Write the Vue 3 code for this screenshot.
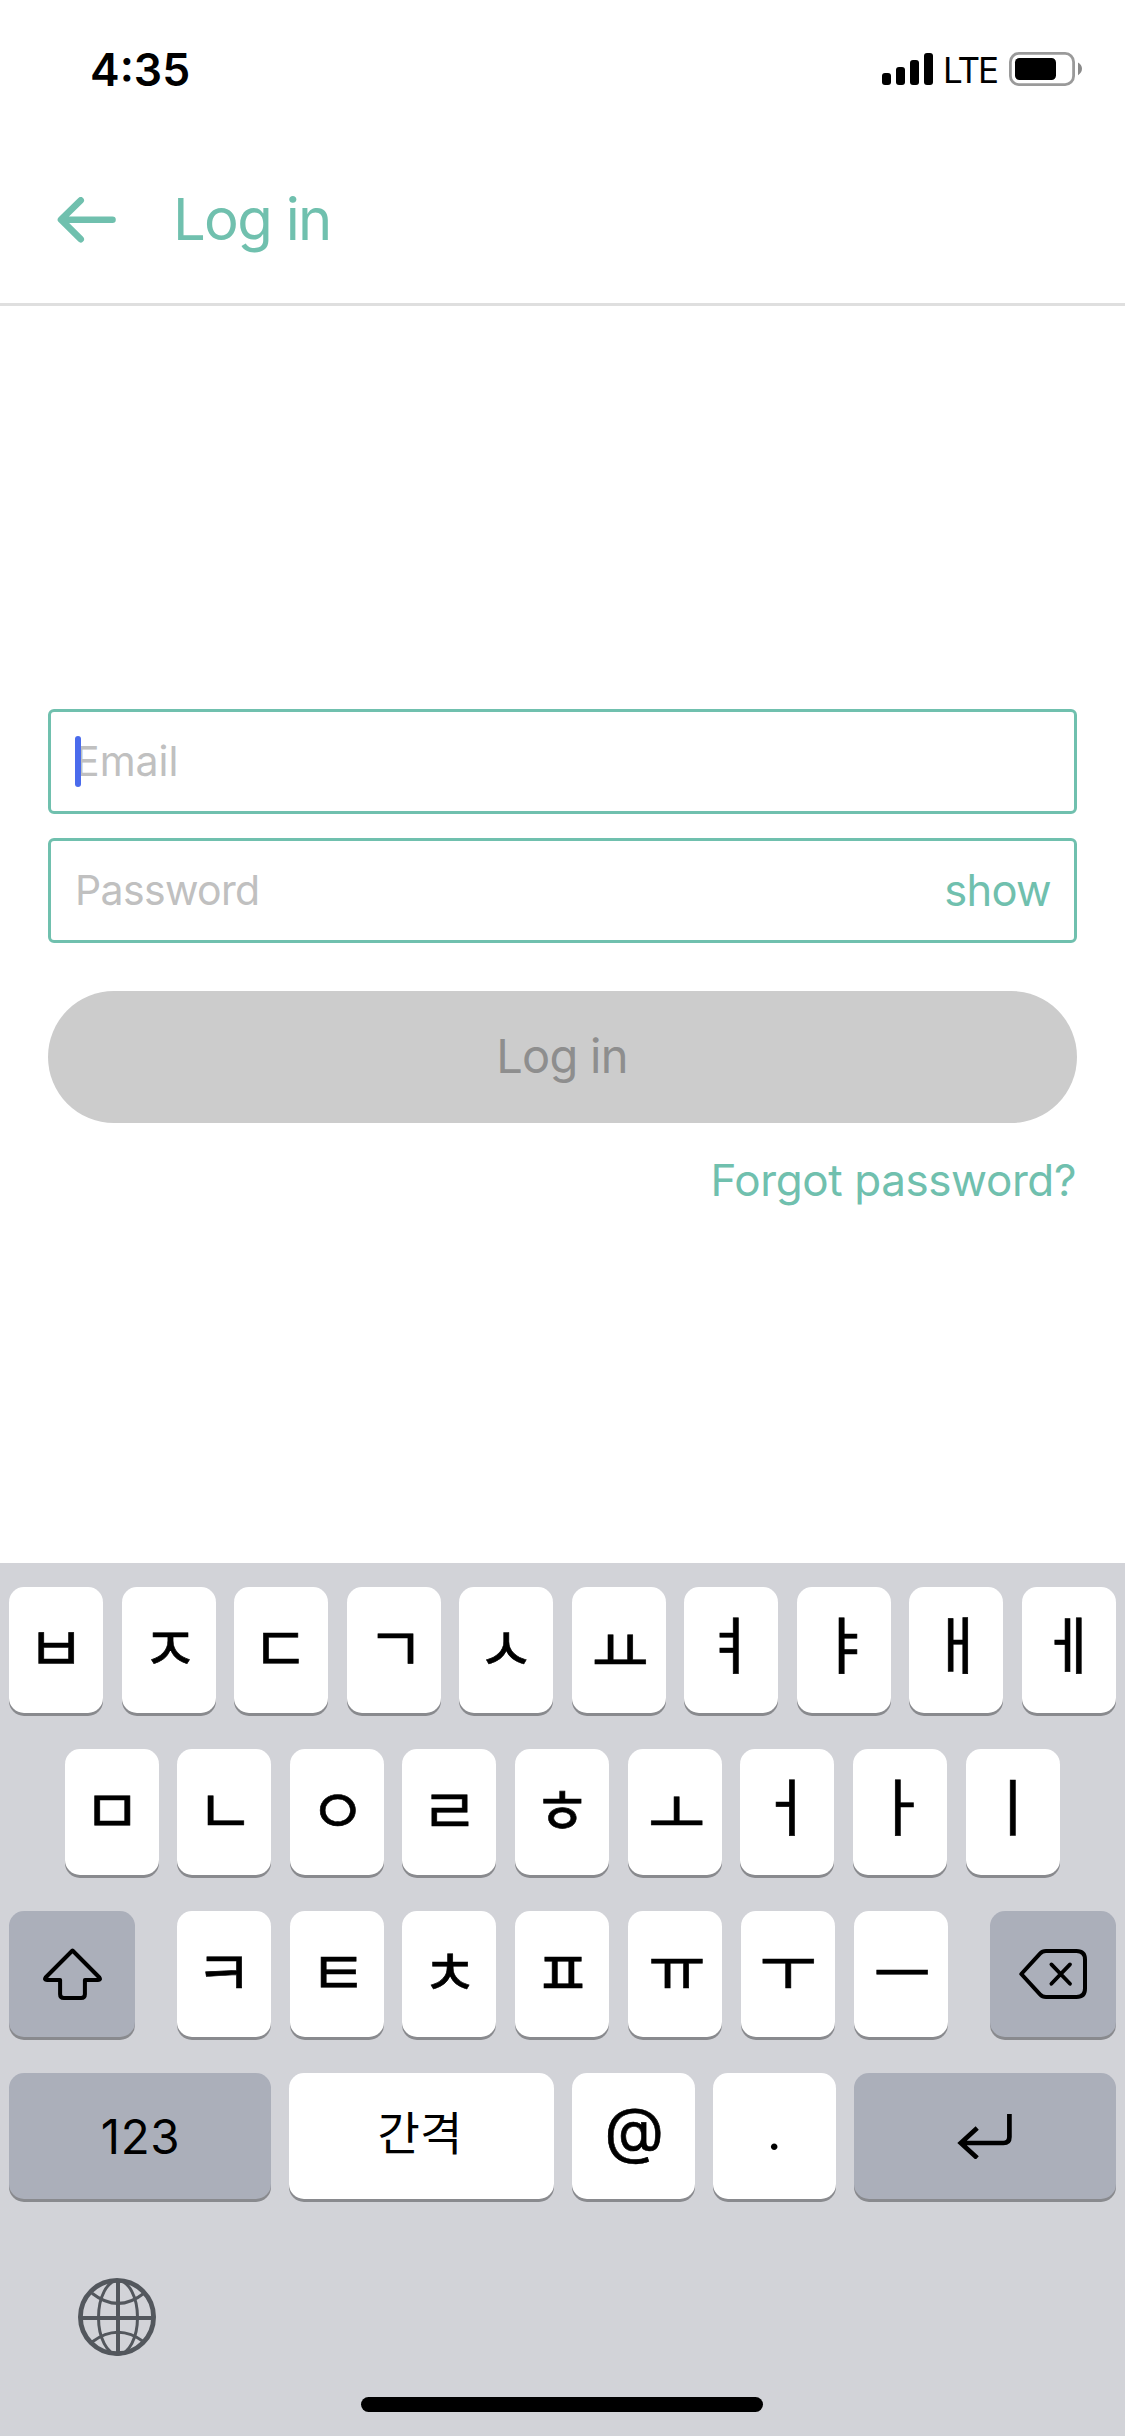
<script setup>
// dx / dy nudge each glyph to its optical position on the key cap
const C = -4.75
const V = -8.25
const rowOne = [
  { c: 'ㅂ', dx: 0, dy: C },
  { c: 'ㅈ', dx: 1.5, dy: C },
  { c: 'ㄷ', dx: -0.5, dy: C },
  { c: 'ㄱ', dx: 2, dy: C },
  { c: 'ㅅ', dx: 0, dy: C },
  { c: 'ㅛ', dx: 1.5, dy: -2.5 },
  { c: 'ㅕ', dx: -1, dy: V },
  { c: 'ㅑ', dx: 1.5, dy: V },
  { c: 'ㅐ', dx: 1.5, dy: V },
  { c: 'ㅔ', dx: 0.5, dy: V },
]
const rowTwo = [
  { c: 'ㅁ', dx: 0.5, dy: C },
  { c: 'ㄴ', dx: 1, dy: C },
  { c: 'ㅇ', dx: 1, dy: C },
  { c: 'ㄹ', dx: 0, dy: C },
  { c: 'ㅎ', dx: 0, dy: C },
  { c: 'ㅗ', dx: 2, dy: -2.5 },
  { c: 'ㅓ', dx: -1, dy: V },
  { c: 'ㅏ', dx: -0.5, dy: V },
  { c: 'ㅣ', dx: 0, dy: V },
]
const rowThree = [
  { c: 'ㅋ', dx: 0, dy: C },
  { c: 'ㅌ', dx: 1.5, dy: C },
  { c: 'ㅊ', dx: 0.5, dy: C },
  { c: 'ㅍ', dx: 0.5, dy: C },
  { c: 'ㅠ', dx: 2, dy: -9 },
  { c: 'ㅜ', dx: 0, dy: -9 },
  { c: 'ㅡ', dx: 1.5, dy: -4 },
]
const shift = (k) => ({ transform: `translate(${k.dx}px, ${k.dy}px)` })
</script>

<template>
  <div class="screen">
    <div class="status">
      <span class="time">4:35</span>
      <div class="indicators">
        <svg class="signal" width="51" height="34" viewBox="0 0 51 34">
          <rect x="0" y="21" width="9" height="12" rx="3" />
          <rect x="14" y="15" width="9" height="18" rx="3" />
          <rect x="28" y="8" width="9" height="25" rx="3" />
          <rect x="42" y="1" width="9" height="32" rx="3" />
        </svg>
        <span class="network">LTE</span>
        <svg class="battery" width="74" height="34" viewBox="0 0 74 34">
          <rect x="1.4" y="1.4" width="63.2" height="31.2" rx="8.5" fill="none" stroke="#9a9a9a" stroke-width="2.8" />
          <rect x="6" y="6" width="41" height="22" rx="4.5" fill="#000" />
          <path d="M69 10.5Q73 13 73 16.8T69 23.2Z" fill="#8a8a8a" />
        </svg>
      </div>
    </div>

    <header class="header">
      <svg class="back" width="60" height="46" viewBox="0 0 60 46">
        <path d="M55.5 22.7H4.5M23.7 3.3L4 22.7L23.7 42.2" fill="none" stroke="#70c0ae" stroke-width="6.6" stroke-linecap="round" stroke-linejoin="round" />
      </svg>
      <h1 class="title">Log in</h1>
    </header>

    <main class="form">
      <div class="field">
        <span class="caret"></span>
        <span class="placeholder">Email</span>
      </div>
      <div class="field">
        <span class="placeholder password">Password</span>
        <span class="show">show</span>
      </div>
      <button class="submit" type="button">Log in</button>
      <a class="forgot">Forgot password?</a>
    </main>

    <section class="keyboard">
      <div class="row">
        <div v-for="k in rowOne" :key="k.c" class="key jamo"><span :style="shift(k)">{{ k.c }}</span></div>
      </div>
      <div class="row row-two">
        <div v-for="k in rowTwo" :key="k.c" class="key jamo"><span :style="shift(k)">{{ k.c }}</span></div>
      </div>
      <div class="row">
        <div class="key dark modifier">
          <svg class="shift" width="60" height="52" viewBox="0 0 60 52">
            <path d="M29.5 2.5L2.6 29.5Q1 32 4 32H17.1V46.2Q17.1 50 20.9 50H38.1Q41.9 50 41.9 46.2V32H55Q58 32 56.4 29.5Z" fill="none" stroke="#000" stroke-width="4" stroke-linejoin="round" />
          </svg>
        </div>
        <div class="letters">
          <div v-for="k in rowThree" :key="k.c" class="key jamo"><span :style="shift(k)">{{ k.c }}</span></div>
        </div>
        <div class="key dark modifier">
          <svg width="68" height="50" viewBox="0 0 68 50">
            <path d="M2.3 25L21 4.6Q23.4 2 27 2H57.5Q66 2 66 10.5V39.5Q66 48 57.5 48H27Q23.4 48 21 45.4Z" fill="none" stroke="#000" stroke-width="4" stroke-linejoin="round" />
            <path d="M32.4 15.4L51 34.8M51 15.4L32.4 34.8" fill="none" stroke="#000" stroke-width="3.8" stroke-linecap="round" />
          </svg>
        </div>
      </div>
      <div class="row">
        <div class="key dark wide numbers"><span>123</span></div>
        <div class="key space"><span>간격</span></div>
        <div class="key half at"><span>@</span></div>
        <div class="key half dot"><span>.</span></div>
        <div class="key dark wide">
          <svg width="56" height="46" viewBox="0 0 56 46">
            <path d="M52.4 1V24Q52.4 30 46.4 30H4M20.2 15L3.8 30L20.2 45" fill="none" stroke="#000" stroke-width="4.7" />
          </svg>
        </div>
      </div>
      <div class="globe">
        <svg width="78" height="78" viewBox="0 0 78 78" fill="none" stroke="#53575d">
          <circle cx="39" cy="39" r="36.6" stroke-width="4.8" />
          <path d="M40 3V75M3 40H75" stroke-width="4" />
          <ellipse cx="40" cy="39.5" rx="19.5" ry="37" stroke-width="3" />
          <path d="M14 15.2Q40 35.6 66 15.2M14 64Q40 44.6 66 64" stroke-width="3" />
        </svg>
      </div>
      <div class="home"></div>
    </section>
  </div>
</template>

<style>
body {
  margin: 0;
  background: #fff;
}
</style>

<style scoped>
.screen {
  width: 1125px;
  height: 2436px;
  display: flex;
  flex-direction: column;
  background: #fff;
  font-family: Inter, "Noto Sans CJK KR", sans-serif;
  overflow: hidden;
}
.status {
  height: 138px;
  box-sizing: border-box;
  padding: 0 42px 0 90px;
  display: flex;
  align-items: center;
  justify-content: space-between;
}
.time {
  font-size: 44.5px;
  line-height: 54px;
  font-weight: 600;
  color: #000;
  padding-top: 1px;
}
.indicators {
  display: flex;
  align-items: center;
}
.network {
  width: 63px;
  margin-left: 10px;
  font-size: 35px;
  line-height: 34px;
  letter-spacing: -2px;
  padding-top: 2px;
}
.battery {
  margin-left: 3px;
}
.header {
  height: 165px;
  box-sizing: content-box;
  border-bottom: 3px solid #dfdfdf;
  display: flex;
  align-items: center;
}
.back {
  margin: -2px 0 0 57px;
}
.title {
  margin: -4px 0 0 56px;
  font-size: 58px;
  line-height: 70px;
  font-weight: 400;
  letter-spacing: -1.7px;
  color: #70c0ae;
}
.form {
  height: 1257px;
  box-sizing: border-box;
  padding: 403px 48px 0;
  display: flex;
  flex-direction: column;
}
.field {
  position: relative;
  height: 105px;
  box-sizing: border-box;
  border: 3px solid #70c0ae;
  border-radius: 6px;
  padding: 0 24px 2px;
  margin-bottom: 24px;
  display: flex;
  align-items: center;
  justify-content: space-between;
}
.caret {
  position: absolute;
  left: 24px;
  top: 24px;
  width: 6px;
  height: 51px;
  border-radius: 3px;
  background: #4a6bec;
}
.placeholder {
  font-size: 41px;
  line-height: 50px;
  color: #c0c0c0;
}
.password {
  letter-spacing: -0.65px;
}
.show {
  font-size: 43.5px;
  line-height: 50px;
  letter-spacing: -0.7px;
  margin-right: -1px;
  color: #70c0ae;
}
.submit {
  height: 132px;
  margin: 24px 0 0;
  padding: 0 1px 2px 0;
  border: 0;
  border-radius: 66px;
  background: #ccc;
  color: #8e8e8e;
  font: 400 47px/130px Inter, sans-serif;
  letter-spacing: -0.75px;
}
.forgot {
  align-self: flex-end;
  margin: 30px 1px 0 0;
  font-size: 44px;
  line-height: 54px;
  letter-spacing: -0.4px;
  color: #70c0ae;
}
.keyboard {
  height: 873px;
  box-sizing: border-box;
  padding: 24px 9.4px 0 9px;
  display: flex;
  flex-direction: column;
  background: #d2d3d8;
  color: #000;
}
.row {
  height: 126px;
  margin-bottom: 36px;
  display: flex;
  justify-content: space-between;
}
.row-two {
  padding: 0 56px 0 55.6px;
}
.letters {
  width: 771px;
  display: flex;
  justify-content: space-between;
}
.key {
  width: 94px;
  height: 126px;
  border-radius: 15px;
  background: #fff;
  box-shadow: 0 3px 0 #898a8e;
  display: flex;
  align-items: center;
  justify-content: center;
  font: 400 62.5px/126px "Noto Sans CJK KR", sans-serif;
}
.jamo {
  -webkit-text-stroke: 0.6px #000;
}
.key span {
  display: block;
}
.dark {
  background: #abafba;
}
.modifier {
  width: 126px;
}
.shift {
  margin-left: 1px;
}
.wide {
  width: 262px;
}
.numbers {
  font: 400 47.5px/126px Inter, sans-serif;
  letter-spacing: 0.6px;
}
.numbers span {
  transform: translate(0.5px, 1px);
}
.space {
  width: 265px;
  font-size: 46px;
}
.space span {
  transform: translate(-1.5px, -6px);
}
.half {
  width: 123px;
}
.at {
  font: 400 61.5px/126px Inter, sans-serif;
  -webkit-text-stroke: 0.6px #000;
}
.at span {
  transform: translate(1px, -6px);
}
.dot {
  font: 400 50px/126px Inter, sans-serif;
}
.dot span {
  transform: translate(0, -4px);
}
.globe {
  height: 78px;
  margin: 43px 0 0 69px;
}
.home {
  width: 402px;
  height: 15px;
  margin: 41px auto 0;
  border-radius: 8px;
  background: #000;
}
</style>
